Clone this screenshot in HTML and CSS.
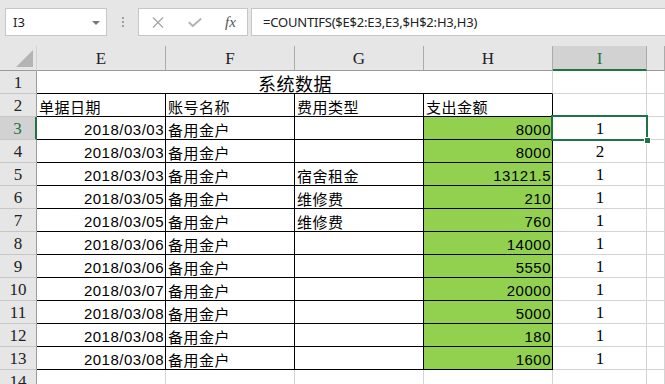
FILE: index.html
```html
<!DOCTYPE html>
<html lang="zh-CN">
<head>
  <meta charset="UTF-8">
  <title>系统数据</title>
  <link rel="stylesheet" href="styles.css">
</head>
<body>

<div class="formula-bar">
  <div class="name-box">
    <span>I3</span>
    <span class="drop"></span>
  </div>
  <div class="grip"><i></i><i></i><i></i></div>
  <div class="fn-box">
    <svg class="ico" width="12" height="11" viewBox="0 0 12 11"><path d="M1 0.5 L11 10.5 M11 0.5 L1 10.5" stroke="#a6a6a6" stroke-width="1.3" fill="none"/></svg>
    <svg class="ico" width="14" height="9" viewBox="0 0 14 9"><path d="M0.8 4.2 L4.8 8 L13.2 0.6" stroke="#b3b3b3" stroke-width="2" fill="none"/></svg>
    <span class="fx">fx</span>
  </div>
  <div class="formula">=COUNTIFS($E$2:E3,E3,$H$2:H3,H3)</div>
</div>

<div class="sheet">
  <div class="hd corner"><div class="tri"></div></div>
  <div class="hd col">E</div>
  <div class="hd col">F</div>
  <div class="hd col">G</div>
  <div class="hd col">H</div>
  <div class="hd col sel">I</div>
  <div class="hd col"></div>

  <div class="hd row">1</div>
  <div class="c title">系统数据</div>
  <div class="c i"></div>
  <div class="c"></div>

  <div class="hd row">2</div>
  <div class="c b">单据日期</div>
  <div class="c b">账号名称</div>
  <div class="c b">费用类型</div>
  <div class="c b">支出金额</div>
  <div class="c i"></div>
  <div class="c"></div>
</div>

<div class="selection"><span class="handle"></span></div>

<script>
  const rows = [
    ['2018/03/03', '', '8000', 1],
    ['2018/03/03', '', '8000', 2],
    ['2018/03/03', '宿舍租金', '13121.5', 1],
    ['2018/03/05', '维修费', '210', 1],
    ['2018/03/05', '维修费', '760', 1],
    ['2018/03/06', '', '14000', 1],
    ['2018/03/06', '', '5550', 1],
    ['2018/03/07', '', '20000', 1],
    ['2018/03/08', '', '5000', 1],
    ['2018/03/08', '', '180', 1],
    ['2018/03/08', '', '1600', 1]
  ];

  const sheet = document.querySelector('.sheet');
  let html = '';
  rows.forEach(function (r, n) {
    const num = n + 3;
    html += '<div class="hd row' + (num === 3 ? ' sel' : '') + '">' + num + '</div>';
    html += '<div class="c b num">' + r[0] + '</div>';
    html += '<div class="c b">备用金户</div>';
    html += '<div class="c b">' + r[1] + '</div>';
    html += '<div class="c b num green">' + r[2] + '</div>';
    html += '<div class="c i">' + r[3] + '</div>';
    html += '<div class="c"></div>';
  });
  html += '<div class="hd row">14</div>';
  for (let k = 0; k < 6; k++) html += '<div class="c"></div>';
  sheet.insertAdjacentHTML('beforeend', html);
</script>

</body>
</html>
```

FILE: styles.css
```css
body {
  margin: 0;
  width: 665px;
  height: 384px;
  overflow: hidden;
  background: #e6e6e6;
  position: relative;
  font-family: 'Liberation Sans', 'Noto Sans CJK SC', sans-serif;
}

/* formula bar */
.formula-bar {
  display: flex;
  align-items: flex-start;
  height: 46px;
  padding-top: 8px;
  box-sizing: border-box;
}

.name-box {
  margin-left: 5px;
  width: 102px;
  height: 28px;
  box-sizing: border-box;
  background: #fff;
  border: 1px solid #c6c6c6;
  display: flex;
  align-items: center;
  justify-content: space-between;
  padding: 0 6px 0 7px;
  font-family: 'Noto Sans', sans-serif;
  font-size: 13px;
  color: #222;
}

.drop {
  width: 0;
  height: 0;
  border-left: 4px solid transparent;
  border-right: 4px solid transparent;
  border-top: 4px solid #777;
  margin-top: 1px;
}

.grip {
  width: 31px;
  display: flex;
  flex-direction: column;
  align-items: center;
  gap: 2px;
  padding-top: 9px;
}

.grip i {
  width: 2px;
  height: 2px;
  background: #a0a0a0;
}

.fn-box {
  width: 110px;
  height: 28px;
  box-sizing: border-box;
  background: #fff;
  border: 1px solid #c6c6c6;
  display: flex;
  align-items: center;
  padding-left: 13px;
}

.ico { margin-right: 24px; }

.fx {
  font-family: 'Liberation Serif', serif;
  font-style: italic;
  font-size: 15px;
  color: #555;
  margin-left: -1px;
}

.formula {
  flex: 1;
  margin-left: 3px;
  height: 28px;
  box-sizing: border-box;
  background: #fff;
  border: 1px solid #c6c6c6;
  border-right: none;
  padding-left: 11px;
  line-height: 26px;
  font-family: 'Noto Sans', sans-serif;
  font-size: 13px;
  letter-spacing: -0.2px;
  color: #222;
  white-space: nowrap;
}

/* grid */
.sheet {
  display: grid;
  grid-template-columns: 37px 129px 129px 129px 129px 94px 1fr;
  grid-template-rows: 25px repeat(14, 23px);
  background: #fff;
}

.sheet > div {
  box-sizing: border-box;
  border-right: 1px solid #d4d4d4;
  border-bottom: 1px solid #d4d4d4;
  display: flex;
  align-items: center;
  min-width: 0;
  white-space: nowrap;
  overflow: hidden;
}

.hd {
  background: #e6e6e6;
  font-family: 'Liberation Serif', serif;
  font-size: 17px;
  color: #222;
  justify-content: center;
}

.sheet > .hd.col {
  border-right-color: #ababab;
  border-bottom-color: #9b9b9b;
  padding-top: 2px;
}

.sheet > .hd.row {
  border-right-color: #9b9b9b;
  border-bottom-color: #c6c6c6;
  padding-top: 2px;
}

.sheet > .corner {
  border-bottom-color: #9b9b9b;
  align-items: flex-end;
  justify-content: flex-end;
  padding: 0 3px 3px 0;
}

.tri {
  width: 17px;
  height: 17px;
  background: #b4b4b4;
  clip-path: polygon(100% 0, 100% 100%, 0 100%);
}

.sheet > .hd.col.sel {
  background: #d2d2d2;
  color: #217346;
  border-bottom: 2px solid #217346;
}

.sheet > .hd.row.sel {
  background: #d2d2d2;
  color: #217346;
  border-right: 2px solid #217346;
}

.c {
  font-size: 15px;
  letter-spacing: 0.5px;
  color: #000;
  padding: 2px 1px 0 2px;
}

.sheet > .title {
  grid-column: 2 / span 4;
  justify-content: center;
  font-size: 18px;
  border-bottom-color: #000;
}

.sheet > .b {
  border-right-color: #000;
  border-bottom-color: #000;
}

.num { justify-content: flex-end; }

.green { background: #92d050; }

.i {
  justify-content: center;
  font-family: 'Liberation Serif', serif;
  font-size: 17px;
  letter-spacing: 0;
}

/* active cell */
.selection {
  position: absolute;
  left: 551px;
  top: 115px;
  width: 97px;
  height: 26px;
  box-sizing: border-box;
  border: 2px solid #217346;
}

.handle {
  position: absolute;
  right: -5px;
  bottom: -5px;
  width: 5px;
  height: 5px;
  background: #217346;
  border: 1px solid #fff;
}
```
